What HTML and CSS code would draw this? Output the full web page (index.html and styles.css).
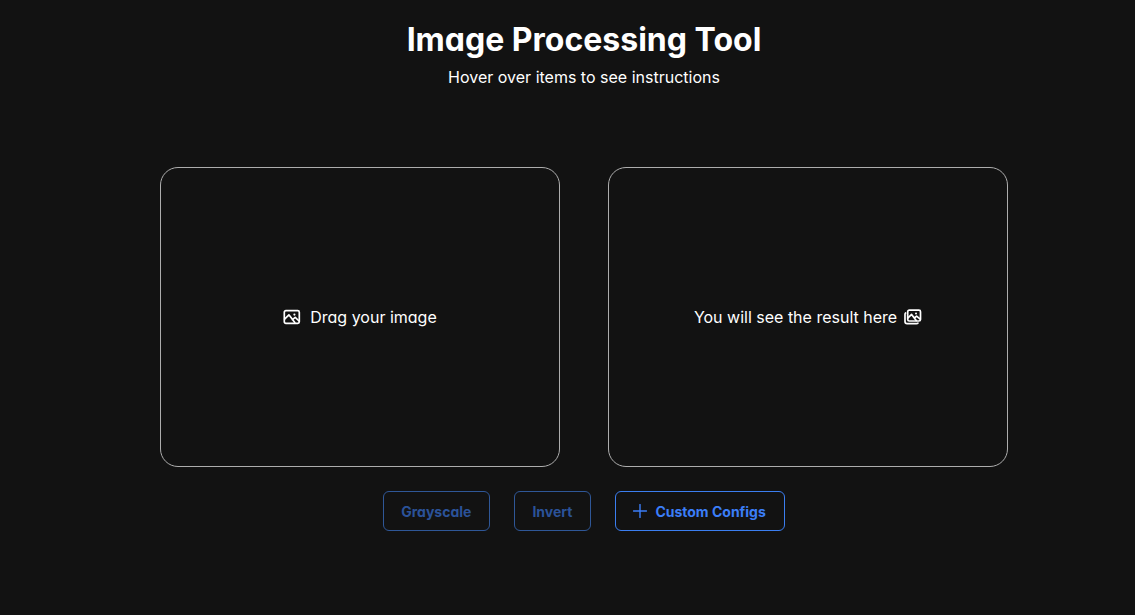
FILE: index.html
```html
<!DOCTYPE html>
<html lang="en">
<head>
<meta charset="utf-8">
<meta name="viewport" content="width=device-width, initial-scale=1">
<title>Image Processing Tool</title>
<link rel="stylesheet" href="styles.css">
</head>
<body>
<main class="page">
  <header class="header">
    <h1 class="title">Image Processing Tool</h1>
    <p class="subtitle">Hover over items to see instructions</p>
  </header>
  <div class="panels">
    <section class="panel panel-source">
      <svg class="icon" viewBox="0 0 18 18" aria-hidden="true">
        <rect x="1.3" y="2.6" width="15" height="12.8" rx="1.6"/>
        <path d="M1.6 11.2 5.9 6.8 11.8 14.6M9.4 11.6 12.2 9.4 16 13"/>
        <circle class="dot" cx="11.4" cy="6.6" r="1.1"/>
      </svg>
      <span>Drag your image</span>
    </section>
    <section class="panel panel-result">
      <span>You will see the result here</span>
      <svg class="icon" viewBox="0 0 18 18" aria-hidden="true">
        <rect x="3.7" y="2.2" width="12.8" height="10.8" rx="1.6"/>
        <path d="M4 9.9 7.6 6.4 12.2 12.5M10.4 10 12.6 8.2 16.2 11.2M1.6 5C1.1 5.4 1 5.8 1 6.4v7.2c0 1.4.8 2.1 2.1 2.1h9.3c.8 0 1.3-.2 1.6-.6"/>
        <circle class="dot" cx="12" cy="5.6" r="1"/>
      </svg>
    </section>
  </div>
  <div class="actions">
    <button class="button" type="button" disabled>Grayscale</button>
    <button class="button" type="button" disabled>Invert</button>
    <button class="button" type="button">
      <svg class="plus" viewBox="0 0 14 14" aria-hidden="true"><path d="M7 .5v13M.5 7h13"/></svg>
      <span class="label">Custom Configs</span>
    </button>
  </div>
</main>
</body>
</html>
```
FILE: styles.css
```css
* {
  box-sizing: border-box;
}

body {
  margin: 0;
  min-height: 100vh;
  background: #121212;
  color: #fff;
  font-family: Inter, "Liberation Sans", sans-serif;
  font-feature-settings: "cv02", "cv03", "cv04", "cv11";
  font-size: 16px;
  line-height: 24px;
}

.page {
  display: flex;
  flex-direction: column;
  align-items: center;
  padding: 20px 0 20px 33px;
}

.header {
  text-align: center;
}

.title {
  margin: 0;
  font-size: 32px;
  font-weight: 700;
  line-height: 40px;
}

.subtitle {
  margin: 5px 0 0;
}

.panels {
  display: flex;
  justify-content: center;
  gap: 48px;
  width: 100%;
  margin-top: 78px;
}

.panel {
  display: flex;
  align-items: center;
  justify-content: center;
  flex: 0 1 400px;
  min-height: 300px;
  border: 1px solid #adadad;
  border-radius: 18px;
}

.panel-source {
  gap: 9px;
}

.panel-result {
  gap: 7px;
}

.icon {
  width: 18px;
  height: 18px;
  fill: none;
  stroke: #fff;
  stroke-width: 1.7;
  stroke-linecap: round;
  stroke-linejoin: round;
}

.dot {
  fill: #fff;
  stroke: none;
}

.actions {
  display: flex;
  gap: 24px;
  margin-top: 24px;
}

.button {
  display: flex;
  align-items: center;
  gap: 8px;
  height: 40px;
  padding: 2px 18px 0 17px;
  border: 1px solid #3b7ef0;
  border-radius: 6px;
  background: transparent;
  color: #3b7ef8;
  font: inherit;
  font-size: 14px;
  font-weight: 700;
  cursor: pointer;
}

.button:disabled {
  border-color: #2f5797;
  color: #2b5299;
  cursor: default;
}

.plus {
  width: 14px;
  height: 14px;
  margin-bottom: 2px;
  fill: none;
  stroke: currentColor;
  stroke-width: 1.4;
  stroke-linecap: round;
}
```
